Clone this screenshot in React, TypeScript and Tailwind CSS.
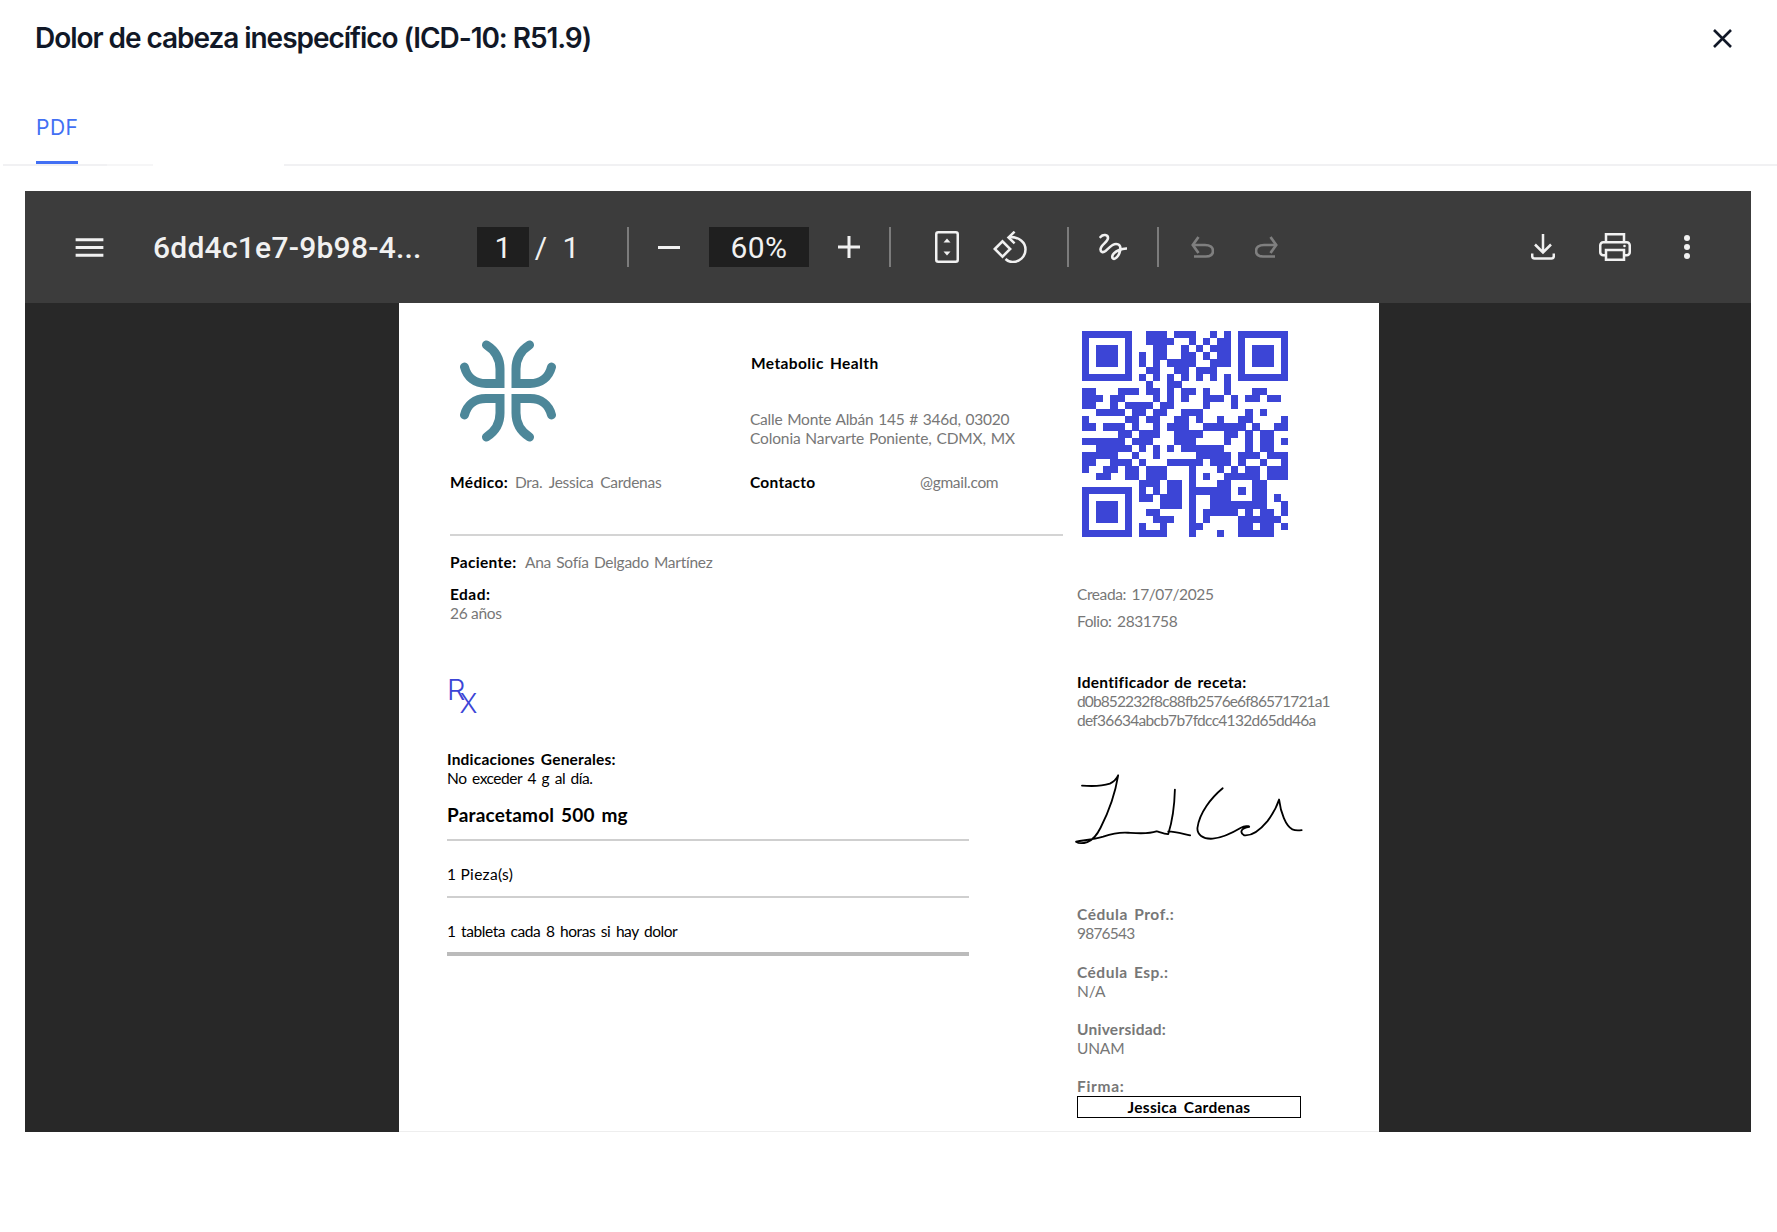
const QR_ROWS: number[][] = [
  [9, 10, 11, 13, 14, 15, 18, 20],
  [9, 10, 11, 12, 15, 17, 19, 20],
  [10, 11, 14, 16, 18, 19, 20],
  [8, 10, 11, 14, 15, 17, 19, 20],
  [8, 10, 12, 13, 14, 15, 18, 19, 20],
  [9, 10, 13, 14, 16, 17, 18],
  [8, 10, 12, 14, 16, 18, 20],
  [9, 12, 13, 20],
  [0, 1, 5, 6, 7, 9, 10, 12, 14, 15, 17, 20, 24, 25],
  [0, 1, 2, 4, 5, 10, 12, 14, 17, 18, 19, 21, 23, 24, 26, 27],
  [0, 1, 4, 6, 7, 8, 9, 11, 12, 17, 21],
  [2, 3, 4, 5, 7, 8, 10, 11, 14, 15, 16, 23, 25],
  [0, 6, 7, 9, 10, 13, 14, 16, 19, 22, 23, 28],
  [0, 1, 3, 4, 5, 7, 10, 12, 13, 14, 17, 18, 19, 20, 21, 22, 24, 27, 28],
  [5, 6, 8, 9, 10, 13, 14, 15, 16, 20, 21, 23, 25, 26],
  [0, 1, 2, 3, 4, 5, 7, 8, 9, 13, 14, 15, 20, 23, 25, 26, 28],
  [2, 3, 4, 5, 6, 8, 10, 12, 14, 15, 16, 17, 18, 19, 23, 25, 26],
  [0, 1, 2, 3, 4, 7, 10, 16, 17, 18, 19, 20, 22, 23, 24, 26, 27, 28],
  [0, 1, 4, 5, 6, 8, 12, 13, 14, 15, 16, 18, 19, 20, 22, 25, 28],
  [0, 3, 4, 6, 7, 9, 10, 11, 15, 19, 21, 23, 24, 26, 27, 28],
  [2, 3, 6, 7, 9, 10, 11, 15, 17, 20, 21, 22, 23, 24, 26, 27, 28],
  [8, 9, 10, 12, 13, 15, 19, 20, 24, 25],
  [8, 10, 12, 13, 15, 16, 17, 18, 19, 20, 22, 24, 25],
  [8, 9, 11, 12, 13, 15, 18, 19, 20, 24, 25, 27],
  [11, 12, 13, 15, 18, 19, 20, 21, 22, 23, 24, 25, 28],
  [9, 10, 15, 17, 18, 19, 20, 21, 23, 25, 26, 28],
  [10, 11, 12, 15, 17, 22, 23, 24, 25, 26, 27],
  [8, 11, 15, 16, 22, 23, 25, 26, 28],
  [8, 9, 10, 11, 15, 19, 22, 23, 24, 25, 26],
];

function Finder({ x, y }: { x: number; y: number }) {
  return (
    <g>
      <path d={`M${x} ${y}h7v7h-7zM${x + 1} ${y + 1}v5h5v-5z`} fillRule="evenodd" />
      <rect x={x + 2} y={y + 2} width={3} height={3} />
    </g>
  );
}

function QrCode() {
  return (
    <svg viewBox="0 0 29 29" className="w-[206px] h-[206px] ml-[5px] fill-[#3c45d6]" shapeRendering="crispEdges">
      <Finder x={0} y={0} />
      <Finder x={22} y={0} />
      <Finder x={0} y={22} />
      {QR_ROWS.map((cols, row) =>
        cols.map((col) => <rect key={`${row}-${col}`} x={col} y={row} width={1.02} height={1.02} />)
      )}
    </svg>
  );
}

function Logo() {
  const arm = "M-21.5 -46 C-12 -40 -8 -32 -8 -22 L-8 -7.5 L-22 -7.5 C-33 -7.5 -41 -14 -43.5 -24";
  return (
    <svg viewBox="-50 -52 100 104" className="w-[100px] h-[104px] ml-[8px] -mt-[2px]" fill="none" stroke="#4d8799" strokeWidth="9" strokeLinecap="round">
      <path d={arm} />
      <path d={arm} transform="scale(-1 1)" />
      <path d={arm} transform="scale(1 -1)" />
      <path d={arm} transform="scale(-1 -1)" />
    </svg>
  );
}

function Signature() {
  return (
    <svg viewBox="40 610 700 220" className="w-[233px] h-[73px] -ml-[4px]" fill="none" stroke="#000" strokeWidth="5.5" strokeLinecap="round" strokeLinejoin="round">
      <path d="M66 648 C90 650 125 650 150 642 C162 636 170 628 175 617 C168 660 150 720 122 775 C112 795 100 812 82 818 C70 822 55 822 48 817 C70 812 95 812 130 802 C150 795 175 788 205 790 C235 792 265 795 290 786" />
      <path d="M346 660 C345 700 340 750 326 794 C318 795 305 790 292 786 M326 786 C345 786 365 792 392 798" />
      <path d="M490 656 C455 685 420 730 414 775 C412 795 430 810 460 808 C490 805 520 790 545 775 C555 770 570 768 570 772 C545 775 540 790 555 798 C575 800 600 785 625 755 C640 735 652 715 660 690 C665 730 680 770 700 780 C710 784 720 783 728 782" />
    </svg>
  );
}

function FitIcon() {
  return (
    <svg viewBox="0 0 24 32" className="w-[24px] h-[32px] ml-[44px]" fill="none">
      <rect x="1.25" y="1.25" width="21.5" height="29.5" rx="2" stroke="#f1f1f1" strokeWidth="2.5" />
      <path d="M12 7.5 15.5 11.5H8.5ZM12 24.5 15.5 20.5H8.5Z" fill="#f1f1f1" />
    </svg>
  );
}

function RotateIcon() {
  return (
    <svg viewBox="0 0 34 32" className="w-[34px] h-[32px] ml-[34px]" fill="none" stroke="#f1f1f1" strokeWidth="2.5">
      <path d="M1.8 18 9.5 10.3 17.2 18 9.5 25.7Z" />
      <path d="M17 6C26 6 32.5 11 32.5 18.5C32.5 26 26 31 19.5 31C16.5 31 14.5 30 12.5 28" />
      <path d="M21.6 .7 15.5 6.5 21.6 12.3" />
    </svg>
  );
}

function AnnotateIcon() {
  return (
    <svg viewBox="0 0 28 28" className="w-[28px] h-[28px] ml-[30px]" fill="none" stroke="#f1f1f1" strokeWidth="2.6" strokeLinecap="round">
      <path d="M1.5 4C4 1 9 1.5 9 5C9 9 1.5 12 1.5 16.5C1.5 19 4 20 6.5 18C10 15 13 11 17 11C21 11 22 14 21 18C20 23 16 27 14 25.5C11.5 23.5 15 16.5 27.5 15.5" />
    </svg>
  );
}

function UndoIcon({ className }: { className: string }) {
  return (
    <svg viewBox="0 0 23 22" className={`w-[23px] h-[22px] ${className}`} fill="none" stroke="#7f7f7f" strokeWidth="2.7">
      <path d="M7.5 1 1.8 9 7.5 17" />
      <path d="M2 9H14C19 9 22 11.5 22 15C22 18.5 19 20.5 15 20.5H3" />
    </svg>
  );
}

function DownloadIcon() {
  return (
    <svg viewBox="0 0 24 26" className="w-[24px] h-[26px] ml-auto" fill="none" stroke="#f1f1f1" strokeWidth="2.5">
      <path d="M12 0V18M4 10.5 12 18.5 20 10.5" />
      <path d="M1.2 19.5V22C1.2 23.5 2 24.5 3.5 24.5H20.5C22 24.5 22.8 23.5 22.8 22V19.5" />
    </svg>
  );
}

function PrintIcon() {
  return (
    <svg viewBox="0 0 32 28" className="w-[32px] h-[28px] ml-[44px]" fill="none" stroke="#f1f1f1" strokeWidth="2.5">
      <rect x="1.25" y="9.25" width="29.5" height="13" rx="3" />
      <path d="M7 9V1.25H25V9" />
      <rect x="7" y="17" width="18" height="9.75" fill="#3c3c3c" />
      <circle cx="25.5" cy="13" r="1.3" fill="#f1f1f1" stroke="none" />
    </svg>
  );
}

function Divider({ className }: { className: string }) {
  return <div className={`w-[2px] h-[40px] bg-[#7c7c7c] ${className}`} />;
}

function Toolbar() {
  return (
    <div className="h-[112px] shrink-0 bg-[#3c3c3c] flex items-center pl-[46px] pr-[61px] text-[#f1f1f1] font-['Roboto',sans-serif] text-[30px]">
      <svg viewBox="0 0 24 24" className="w-[37px] h-[37px] shrink-0" fill="#f1f1f1">
        <path d="M3 18h18v-2H3v2zm0-5h18v-2H3v2zm0-7v2h18V6H3z" />
      </svg>
      <span className="w-[324px] ml-[45px] font-medium whitespace-nowrap tracking-[0.25px]">6dd4c1e7-9b98-4...</span>
      <div className="w-[52px] h-[40px] bg-[#1f1f1f] flex items-center justify-center">1</div>
      <span className="w-[24px] text-center">/</span>
      <span className="w-[36px] text-center">1</span>
      <Divider className="ml-[38px]" />
      <div className="w-[80px] flex justify-center">
        <div className="w-[22px] h-[3px] bg-[#f1f1f1]" />
      </div>
      <div className="w-[100px] h-[40px] bg-[#1f1f1f] flex items-center justify-center tracking-[0.5px]">60%</div>
      <div className="w-[80px] flex justify-center">
        <svg viewBox="0 0 22 22" className="w-[22px] h-[22px]" stroke="#f1f1f1" strokeWidth="3">
          <path d="M0 11H22M11 0V22" />
        </svg>
      </div>
      <Divider className="" />
      <FitIcon />
      <RotateIcon />
      <Divider className="ml-[40px]" />
      <AnnotateIcon />
      <Divider className="ml-[30px]" />
      <UndoIcon className="ml-[32px]" />
      <UndoIcon className="ml-[41px] -scale-x-100" />
      <DownloadIcon />
      <PrintIcon />
      <svg viewBox="0 0 6 24" className="w-[6px] h-[24px] ml-[53px]" fill="#f1f1f1">
        <circle cx="3" cy="3" r="3" />
        <circle cx="3" cy="12" r="3" />
        <circle cx="3" cy="21" r="3" />
      </svg>
    </div>
  );
}

const line = "h-[19px] leading-[19px] whitespace-nowrap";
const grey = "text-[#777]";

function PageLeft() {
  return (
    <div className="w-[678px] shrink-0 pl-[51px] pt-[38px]">
      <div className="flex h-[132px]">
        <div className="w-[300px] shrink-0">
          <Logo />
        </div>
        <div className="pt-[13px]">
          <div className={`${line} font-bold ml-[1px] tracking-[0.4px] [word-spacing:2px]`}>Metabolic Health</div>
          <div className={`${line} ${grey} mt-[37px] tracking-[-0.23px] [word-spacing:1px]`}>Calle Monte Albán 145 # 346d, 03020</div>
          <div className={`${line} ${grey} tracking-[-0.14px] [word-spacing:1px]`}>Colonia Narvarte Poniente, CDMX, MX</div>
        </div>
      </div>
      <div className={`${line} flex`}>
        <div className="w-[300px] shrink-0 flex">
          <b className="w-[65px] tracking-[0.35px]">Médico:</b>
          <span className={`${grey} tracking-[-0.27px] [word-spacing:3px]`}>Dra. Jessica Cardenas</span>
        </div>
        <b className="w-[170px] tracking-[0.25px]">Contacto</b>
        <span className={`${grey} tracking-[-0.3px]`}>@gmail.com</span>
      </div>
      <div className="w-[613px] h-[2px] bg-[#d4d4d4] mt-[42px]" />
      <div className={`${line} flex mt-[17px]`}>
        <b className="w-[75px] tracking-[0.33px]">Paciente:</b>
        <span className={`${grey} tracking-[-0.27px] [word-spacing:1.5px]`}>Ana Sofía Delgado Martínez</span>
      </div>
      <div className={`${line} font-bold mt-[13px] tracking-[0.45px]`}>Edad:</div>
      <div className={`${line} ${grey} tracking-[-0.3px]`}>26 años</div>
      <div className="-ml-[3px] w-[522px]">
        <div className="flex items-start h-[32px] mt-[55px] text-[#3c45d6] font-['Inter',sans-serif] font-light">
          <span className="text-[29px] leading-[24px]">R</span>
          <span className="text-[27px] leading-[24px] -ml-[6px] mt-[14px]">X</span>
        </div>
        <div className={`${line} font-bold mt-[40px] tracking-[0.2px] [word-spacing:2px]`}>Indicaciones Generales:</div>
        <div className={`${line} [word-spacing:2px] tracking-[-0.45px]`}>No exceder 4 g al día.</div>
        <div className="h-[24px] leading-[24px] text-[19px] font-bold mt-[15px] [word-spacing:2px] tracking-[0.2px]">Paracetamol 500 mg</div>
        <div className="h-[2px] bg-[#cfcfcf] mt-[12px]" />
        <div className={`${line} mt-[24px] tracking-[0.3px]`}>1 Pieza(s)</div>
        <div className="h-[2px] bg-[#cfcfcf] mt-[12px]" />
        <div className={`${line} mt-[24px] [word-spacing:2px] tracking-[-0.43px]`}>1 tableta cada 8 horas si hay dolor</div>
        <div className="h-[4px] bg-[#bbb] mt-[11px]" />
      </div>
    </div>
  );
}

function PageRight() {
  return (
    <div className="flex-1 pt-[28px]">
      <QrCode />
      <div className={`${line} ${grey} mt-[48px] tracking-[-0.4px] [word-spacing:2px]`}>Creada: 17/07/2025</div>
      <div className={`${line} ${grey} mt-[8px] tracking-[-0.4px] [word-spacing:2px]`}>Folio: 2831758</div>
      <div className={`${line} font-bold mt-[42px] tracking-[0.3px] [word-spacing:1.5px]`}>Identificador de receta:</div>
      <div className={`${line} ${grey} tracking-[-0.87px]`}>d0b852232f8c88fb2576e6f86571721a1</div>
      <div className={`${line} ${grey} tracking-[-0.71px]`}>def36634abcb7b7fdcc4132d65dd46a</div>
      <div className="mt-[43px]">
        <Signature />
      </div>
      <div className={`${line} ${grey} font-bold mt-[59px] tracking-[0.55px] [word-spacing:2px]`}>Cédula Prof.:</div>
      <div className={`${line} ${grey} tracking-[-0.8px]`}>9876543</div>
      <div className={`${line} ${grey} font-bold mt-[20px] tracking-[0.5px] [word-spacing:2px]`}>Cédula Esp.:</div>
      <div className={`${line} ${grey}`}>N/A</div>
      <div className={`${line} ${grey} font-bold mt-[19px] tracking-[0.25px]`}>Universidad:</div>
      <div className={`${line} ${grey} tracking-[-0.2px]`}>UNAM</div>
      <div className={`${line} ${grey} font-bold mt-[19px] tracking-[0.7px]`}>Firma:</div>
      <div className="w-[224px] h-[22px] border-[1.5px] border-black flex items-center justify-center font-bold leading-none pt-[1px] tracking-[0.3px] [word-spacing:2.5px]">
        Jessica Cardenas
      </div>
    </div>
  );
}

export default function App() {
  return (
    <div className="h-[1232px] bg-white flex flex-col overflow-hidden">
      <div className="h-[76px] shrink-0 flex items-center justify-between pl-[35px] pr-[45px]">
        <h1 className="text-[28px] font-semibold tracking-[-1.05px] text-[#111827] font-['Inter',sans-serif]">
          Dolor de cabeza inespecífico (ICD-10: R51.9)
        </h1>
        <svg viewBox="0 0 19 19" className="w-[19px] h-[19px]" fill="none" stroke="#111827" strokeWidth="2.6">
          <path d="M1 1 18 18M18 1 1 18" />
        </svg>
      </div>
      <div className="h-[88px] shrink-0 pl-[36px]">
        <div className="w-[42px] h-full flex flex-col text-[#4270f4] font-['Inter',sans-serif]">
          <span className="text-[21px] leading-[28px] mt-[38px] tracking-[0.5px]">PDF</span>
          <div className="h-[3px] bg-[#4270f4] mt-auto" />
        </div>
      </div>
      <div className="flex h-[2px] shrink-0">
        <div className="w-[3px]" />
        <div className="w-[104px] bg-[#f1f1f3]" />
        <div className="w-[46px] bg-[#f6f6f7]" />
        <div className="w-[131px]" />
        <div className="flex-1 bg-[#f1f1f3]" />
      </div>
      <div className="ml-[25px] w-[1726px] mt-[25px] h-[941px] shrink-0 flex flex-col bg-[#282828]">
        <Toolbar />
        <div className="ml-[374px] w-[980px] flex-1 flex bg-white border-b border-[#eeeeee] text-black text-[15.5px] font-['Lato',sans-serif] overflow-hidden">
          <PageLeft />
          <PageRight />
        </div>
      </div>
    </div>
  );
}
